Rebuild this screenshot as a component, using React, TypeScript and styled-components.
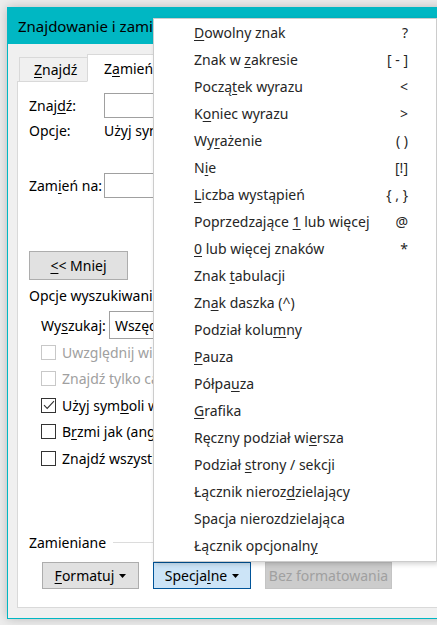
import React from 'react';
import styled, { createGlobalStyle } from 'styled-components';

const GlobalStyle = createGlobalStyle`
  html, body {
    margin: 0;
    padding: 0;
    background: #ededed;
  }
  body {
    font-family: "Noto Sans", "Open Sans", sans-serif;
    font-size: 14px;
    color: #000;
  }
`;

const Stage = styled.div`
  position: relative;
  width: 437px;
  height: 625px;
  overflow: hidden;
  background: #ededed;
`;

const Window = styled.div`
  box-sizing: border-box;
  margin: 7px 0 0 7px;
  width: 470px;
  height: 612px;
  border: 1px solid #00b7c3;
  background: #f0f0f0;
  display: flex;
  flex-direction: column;
  box-shadow: 0 0 10px rgba(0, 0, 0, 0.22);
`;

const TitleBar = styled.div`
  height: 36px;
  flex-shrink: 0;
  background: #00b7c3;
  display: flex;
  align-items: center;
  padding-left: 10px;
  font-size: 15px;
  color: #000;
`;

const Body = styled.div`
  flex: 1;
  display: flex;
  flex-direction: column;
  padding: 10px 0 10px 9px;
  min-height: 0;
`;

const Tabs = styled.div`
  display: flex;
  align-items: flex-end;
  height: 28px;
  padding-left: 2px;
  position: relative;
  z-index: 1;
  margin-bottom: -1px;
`;

const Tab = styled.div<{ $active?: boolean }>`
  box-sizing: border-box;
  display: flex;
  align-items: center;
  height: ${(p) => (p.$active ? 28 : 25)}px;
  width: ${(p) => (p.$active ? 76 : 68)}px;
  padding-left: ${(p) => (p.$active ? 16 : 14)}px;
  background: ${(p) => (p.$active ? '#fff' : '#f0f0f0')};
  border: 1px solid #d9d9d9;
  border-bottom: ${(p) => (p.$active ? '1px solid #fff' : '1px solid #d9d9d9')};
  border-right: ${(p) => (p.$active ? '1px solid #d9d9d9' : 'none')};
  font-size: 14px;
`;

const Panel = styled.div`
  flex: 1;
  display: flex;
  flex-direction: column;
  background: #fff;
  border: 1px solid #d9d9d9;
  padding: 0 0 18px 11px;
`;

const FieldRow = styled.div<{ $top: number }>`
  display: flex;
  align-items: center;
  margin-top: ${(p) => p.$top}px;
`;

const Label = styled.div<{ $w: number }>`
  width: ${(p) => p.$w}px;
  flex-shrink: 0;
`;

const TextBox = styled.div<{ $h?: number }>`
  box-sizing: border-box;
  width: 330px;
  height: ${(p) => p.$h ?? 25}px;
  border: 1px solid #a0a0a0;
  background: #fff;
  display: flex;
  align-items: center;
  padding-left: 5px;
`;

const InfoRow = styled.div`
  display: flex;
  align-items: center;
  height: 20px;
  margin-top: 2px;
`;

const Button = styled.div<{ $variant?: 'focus' | 'disabled'; $w: number }>`
  box-sizing: border-box;
  display: flex;
  align-items: center;
  justify-content: center;
  gap: 5px;
  width: ${(p) => p.$w}px;
  height: 27px;
  flex-shrink: 0;
  background: ${(p) =>
    p.$variant === 'focus' ? '#cce4f7' : p.$variant === 'disabled' ? '#cccccc' : '#e1e1e1'};
  border: 1px solid
    ${(p) =>
      p.$variant === 'focus' ? '#005499' : p.$variant === 'disabled' ? '#c4c4c4' : '#adadad'};
  color: ${(p) => (p.$variant === 'disabled' ? '#a0a0a0' : '#000')};
  font-size: 14px;
`;

const LessButton = styled(Button)`
  height: 29px;
  margin-top: 53px;
`;

const SectionHead = styled.div<{ $top?: number }>`
  display: flex;
  align-items: center;
  gap: 7px;
  height: 20px;
  margin-top: ${(p) => p.$top ?? 0}px;
  &::after {
    content: '';
    flex: 1;
    height: 1px;
    background: #dcdcdc;
  }
`;

const Indent = styled.div`
  padding-left: 12px;
  display: flex;
  flex-direction: column;
`;

const CheckRow = styled.div<{ $disabled?: boolean }>`
  display: flex;
  align-items: center;
  gap: 6px;
  height: 26.5px;
  color: ${(p) => (p.$disabled ? '#a0a0a0' : '#000')};
  white-space: nowrap;
`;

const Box = styled.div<{ $disabled?: boolean }>`
  box-sizing: border-box;
  width: 15px;
  height: 15px;
  flex-shrink: 0;
  border: 1px solid ${(p) => (p.$disabled ? '#c8c8c8' : '#333')};
  background: #fff;
  display: flex;
  align-items: center;
  justify-content: center;
`;

const BottomGroup = styled.div`
  margin-top: auto;
  display: flex;
  flex-direction: column;
`;

const ButtonRow = styled.div`
  display: flex;
  gap: 14px;
  margin-top: 10px;
  padding-left: 13px;
`;

const Acc = styled.span`
  text-decoration: underline;
  text-decoration-thickness: 1px;
  text-underline-offset: 2px;
`;

const Menu = styled.div`
  position: absolute;
  left: 153px;
  top: 18px;
  box-sizing: border-box;
  width: 284px;
  padding: 0 0 2px;
  background: #fff;
  border: 1px solid #cccccc;
  box-shadow: 2px 2px 5px rgba(0, 0, 0, 0.18);
  z-index: 10;
`;

const MenuItem = styled.div`
  display: flex;
  align-items: center;
  justify-content: space-between;
  height: 27px;
  padding: 0 28px 0 40px;
  font-size: 14px;
  color: #262626;
  white-space: nowrap;
`;

const Caret = () => (
  <svg width="7" height="4" viewBox="0 0 7 4">
    <path d="M0 0h7L3.5 4z" fill="currentColor" />
  </svg>
);

const Check = () => (
  <svg width="12" height="10" viewBox="0 0 12 10">
    <path d="M1 5.2l3.2 3.2L11 1.2" fill="none" stroke="#333" strokeWidth="1.1" />
  </svg>
);

const menuItems: [React.ReactNode, string][] = [
  [<><Acc>D</Acc>owolny znak</>, '?'],
  [<>Znak w <Acc>z</Acc>akresie</>, '[ - ]'],
  [<>Począ<Acc>t</Acc>ek wyrazu</>, '<'],
  [<>K<Acc>o</Acc>niec wyrazu</>, '>'],
  [<>Wy<Acc>r</Acc>ażenie</>, '( )'],
  [<>N<Acc>i</Acc>e</>, '[!]'],
  [<><Acc>L</Acc>iczba wystąpień</>, '{ , }'],
  [<>Poprzedzające <Acc>1</Acc> lub więcej</>, '@'],
  [<><Acc>0</Acc> lub więcej znaków</>, '*'],
  [<>Znak <Acc>t</Acc>abulacji</>, ''],
  [<>Zn<Acc>a</Acc>k daszka (^)</>, ''],
  [<>Podział kolu<Acc>m</Acc>ny</>, ''],
  [<><Acc>P</Acc>auza</>, ''],
  [<>Półpa<Acc>u</Acc>za</>, ''],
  [<><Acc>G</Acc>rafika</>, ''],
  [<>Ręczny podział wi<Acc>e</Acc>rsza</>, ''],
  [<>Podział <Acc>s</Acc>trony / sekcji</>, ''],
  [<>Łącznik nieroz<Acc>d</Acc>zielający</>, ''],
  [<>Spac<Acc>j</Acc>a nierozdzielająca</>, ''],
  [<>Łącznik opcjonaln<Acc>y</Acc></>, ''],
];

const checks: { label: React.ReactNode; checked?: boolean; disabled?: boolean }[] = [
  { label: 'Uwzględnij wielkość liter', disabled: true },
  { label: 'Znajdź tylko całe wyrazy', disabled: true },
  { label: <>Użyj sym<Acc>b</Acc>oli wieloznacznych</>, checked: true },
  { label: <>B<Acc>r</Acc>zmi jak (angielski)</> },
  { label: 'Znajdź wszystkie formy wyrazu (angielski)' },
];

export default function App() {
  return (
    <Stage>
      <GlobalStyle />
      <Window>
        <TitleBar>Znajdowanie i zamienianie</TitleBar>
        <Body>
          <Tabs>
            <Tab><Acc>Z</Acc>najdź</Tab>
            <Tab $active>Z<Acc>a</Acc>mień</Tab>
          </Tabs>
          <Panel>
            <FieldRow $top={11}>
              <Label $w={75}>Znaj<Acc>d</Acc>ź:</Label>
              <TextBox />
            </FieldRow>
            <InfoRow>
              <Label $w={75}>Opcje:</Label>
              Użyj symboli wieloznacznych
            </InfoRow>
            <FieldRow $top={33}>
              <Label $w={75}>Zam<Acc>i</Acc>eń na:</Label>
              <TextBox />
            </FieldRow>
            <LessButton $w={99}><span><Acc>&lt;</Acc>&lt; Mniej</span></LessButton>
            <SectionHead $top={5}>Opcje wyszukiwania</SectionHead>
            <Indent>
              <FieldRow $top={6}>
                <Label $w={68}>Wy<Acc>s</Acc>zukaj:</Label>
                <TextBox $h={28}>Wszędzie</TextBox>
              </FieldRow>
              {checks.map((c, i) => (
                <CheckRow key={i} $disabled={c.disabled}>
                  <Box $disabled={c.disabled}>{c.checked && <Check />}</Box>
                  <span>{c.label}</span>
                </CheckRow>
              ))}
            </Indent>
            <BottomGroup>
              <SectionHead>Zamieniane</SectionHead>
              <ButtonRow>
                <Button $w={97}>
                  <span><Acc>F</Acc>ormatuj</span>
                  <Caret />
                </Button>
                <Button $variant="focus" $w={98}>
                  <span>Specja<Acc>l</Acc>ne</span>
                  <Caret />
                </Button>
                <Button $variant="disabled" $w={127}>
                  Bez formatowania
                </Button>
              </ButtonRow>
            </BottomGroup>
          </Panel>
        </Body>
      </Window>
      <Menu>
        {menuItems.map(([label, key], i) => (
          <MenuItem key={i}>
            <span>{label}</span>
            <span>{key}</span>
          </MenuItem>
        ))}
      </Menu>
    </Stage>
  );
}
